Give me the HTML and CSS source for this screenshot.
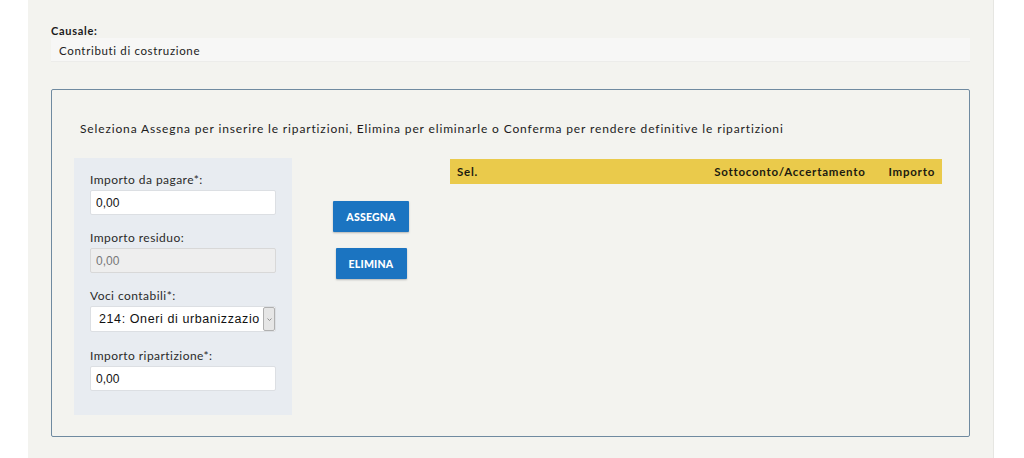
FILE: index.html
```html
<!DOCTYPE html>
<html lang="it">
<head>
<meta charset="utf-8">
<title>Ripartizioni</title>
<link rel="stylesheet" href="styles.css">
</head>
<body>
<div class="page">
  <div class="panel">
    <div class="causale">
      <div class="causale-label">Causale:</div>
      <div class="causale-value">Contributi di costruzione</div>
    </div>
    <div class="box">
      <p class="intro">Seleziona Assegna per inserire le ripartizioni, Elimina per eliminarle o Conferma per rendere definitive le ripartizioni</p>
      <div class="work">
        <div class="form">
          <label class="lbl">Importo da pagare*:</label>
          <input class="inp" type="text" value="0,00">
          <label class="lbl">Importo residuo:</label>
          <input class="inp disabled" type="text" value="0,00" disabled>
          <label class="lbl">Voci contabili*:</label>
          <div class="sel">
            <span class="sel-text">214: Oneri di urbanizzazio</span>
            <span class="sel-btn"><svg width="7" height="5" viewBox="0 0 7 5"><path d="M1.5 1.5 L3.5 3.5 L5.5 1.5" fill="none" stroke="#888" stroke-width="0.9"/></svg></span>
          </div>
          <label class="lbl">Importo ripartizione*:</label>
          <input class="inp last" type="text" value="0,00">
        </div>
        <div class="actions">
          <button class="btn btn-assegna">ASSEGNA</button>
          <button class="btn btn-elimina">ELIMINA</button>
        </div>
        <div class="table">
          <div class="thead">
            <span class="th th-sel">Sel.</span>
            <span class="th th-sott">Sottoconto/Accertamento</span>
            <span class="th th-imp">Importo</span>
          </div>
        </div>
      </div>
    </div>
  </div>
</div>
</body>
</html>
```
FILE: styles.css
```css
html, body {
  margin: 0;
  padding: 0;
  background: #ffffff;
}
body {
  font-family: Lato, "Open Sans", sans-serif;
  color: #1c1c1c;
}
.page {
  padding-left: 28px;
  width: 966px;
}
.panel {
  background: #f3f3ef;
  border-right: 1px solid #e6e6e2;
  height: 458px;
  padding: 24px 23px 0 23px;
  box-sizing: border-box;
}
.causale-label {
  font-size: 11px;
  font-weight: 700;
  letter-spacing: 0.7px;
  color: #1a1a1a;
  line-height: 14px;
}
.causale-value {
  margin-top: 0;
  background: #f7f7f6;
  height: 23px;
  line-height: 25px;
  padding-left: 8px;
  font-size: 11.5px;
  letter-spacing: 0.65px;
  color: #222;
  box-shadow: 0 1px 0 #ececea;
}
.box {
  margin-top: 28px;
  border: 1px solid #6f8aa0;
  border-radius: 2px;
  height: 348px;
  box-sizing: border-box;
  padding: 0 27px 0 22px;
}
.intro {
  margin: 31px 0 0 6px;
  font-size: 12px;
  letter-spacing: 0.86px;
  line-height: 16px;
  color: #1c1c1c;
}
.work {
  display: flex;
  margin-top: 21px;
}
.form {
  width: 218px;
  height: 257px;
  background: #e8ecf1;
  box-sizing: border-box;
  padding: 14px 16px 0 16px;
  display: flex;
  flex-direction: column;
}
.lbl {
  font-size: 12px;
  letter-spacing: 0.45px;
  color: #2a2a2a;
  line-height: 16px;
  margin-bottom: 2px;
}
.inp {
  width: 186px;
  height: 25px;
  box-sizing: border-box;
  border: 1px solid #dcdfe3;
  border-radius: 2px;
  background: #fff;
  font-family: "Liberation Sans", Arial, sans-serif;
  font-size: 12px;
  padding: 0 5px;
  color: #111;
  margin-bottom: 15px;
}
.inp.disabled {
  background: #eeeeee;
  color: #777;
  border-color: #d8d8d8;
}
.sel {
  width: 186px;
  height: 26px;
  box-sizing: border-box;
  display: flex;
  background: #fff;
  border: 1px solid #dcdfe3;
  border-radius: 2px;
  margin-bottom: 16px;
  overflow: hidden;
}
.sel-text {
  flex: 1;
  white-space: nowrap;
  font-family: "Liberation Sans", Arial, sans-serif;
  font-size: 12.5px;
  letter-spacing: 0.6px;
  line-height: 24px;
  padding-left: 8px;
  color: #111;
}
.sel-btn {
  width: 10px;
  border: 1px solid #b0b0b0;
  border-radius: 2px;
  background: #e6e6e6;
  display: flex;
  align-items: center;
  justify-content: center;
}
.actions {
  width: 158px;
  display: flex;
  flex-direction: column;
  align-items: center;
  padding-top: 43px;
}
.btn {
  background: #1b74c1;
  color: #fff;
  border: none;
  border-radius: 1px;
  font-family: Lato, sans-serif;
  font-weight: 900;
  font-size: 10.5px;
  letter-spacing: 0.2px;
  height: 31px;
  padding: 0;
  box-shadow: 0 1px 2px rgba(0,0,0,0.25);
}
.btn-assegna { width: 76px; }
.btn-elimina { width: 71px; margin-top: 16px; }
.table {
  flex: 1;
  padding-top: 1px;
}
.thead {
  background: #eaca4b;
  height: 25px;
  display: flex;
  align-items: center;
  font-size: 11.5px;
  font-weight: 700;
  letter-spacing: 0.75px;
  color: #1c1a10;
}
.th-sel { padding-left: 7px; flex: 1; }
.th-sott { margin-right: 23px; }
.th-imp { margin-right: 7px; }
```
